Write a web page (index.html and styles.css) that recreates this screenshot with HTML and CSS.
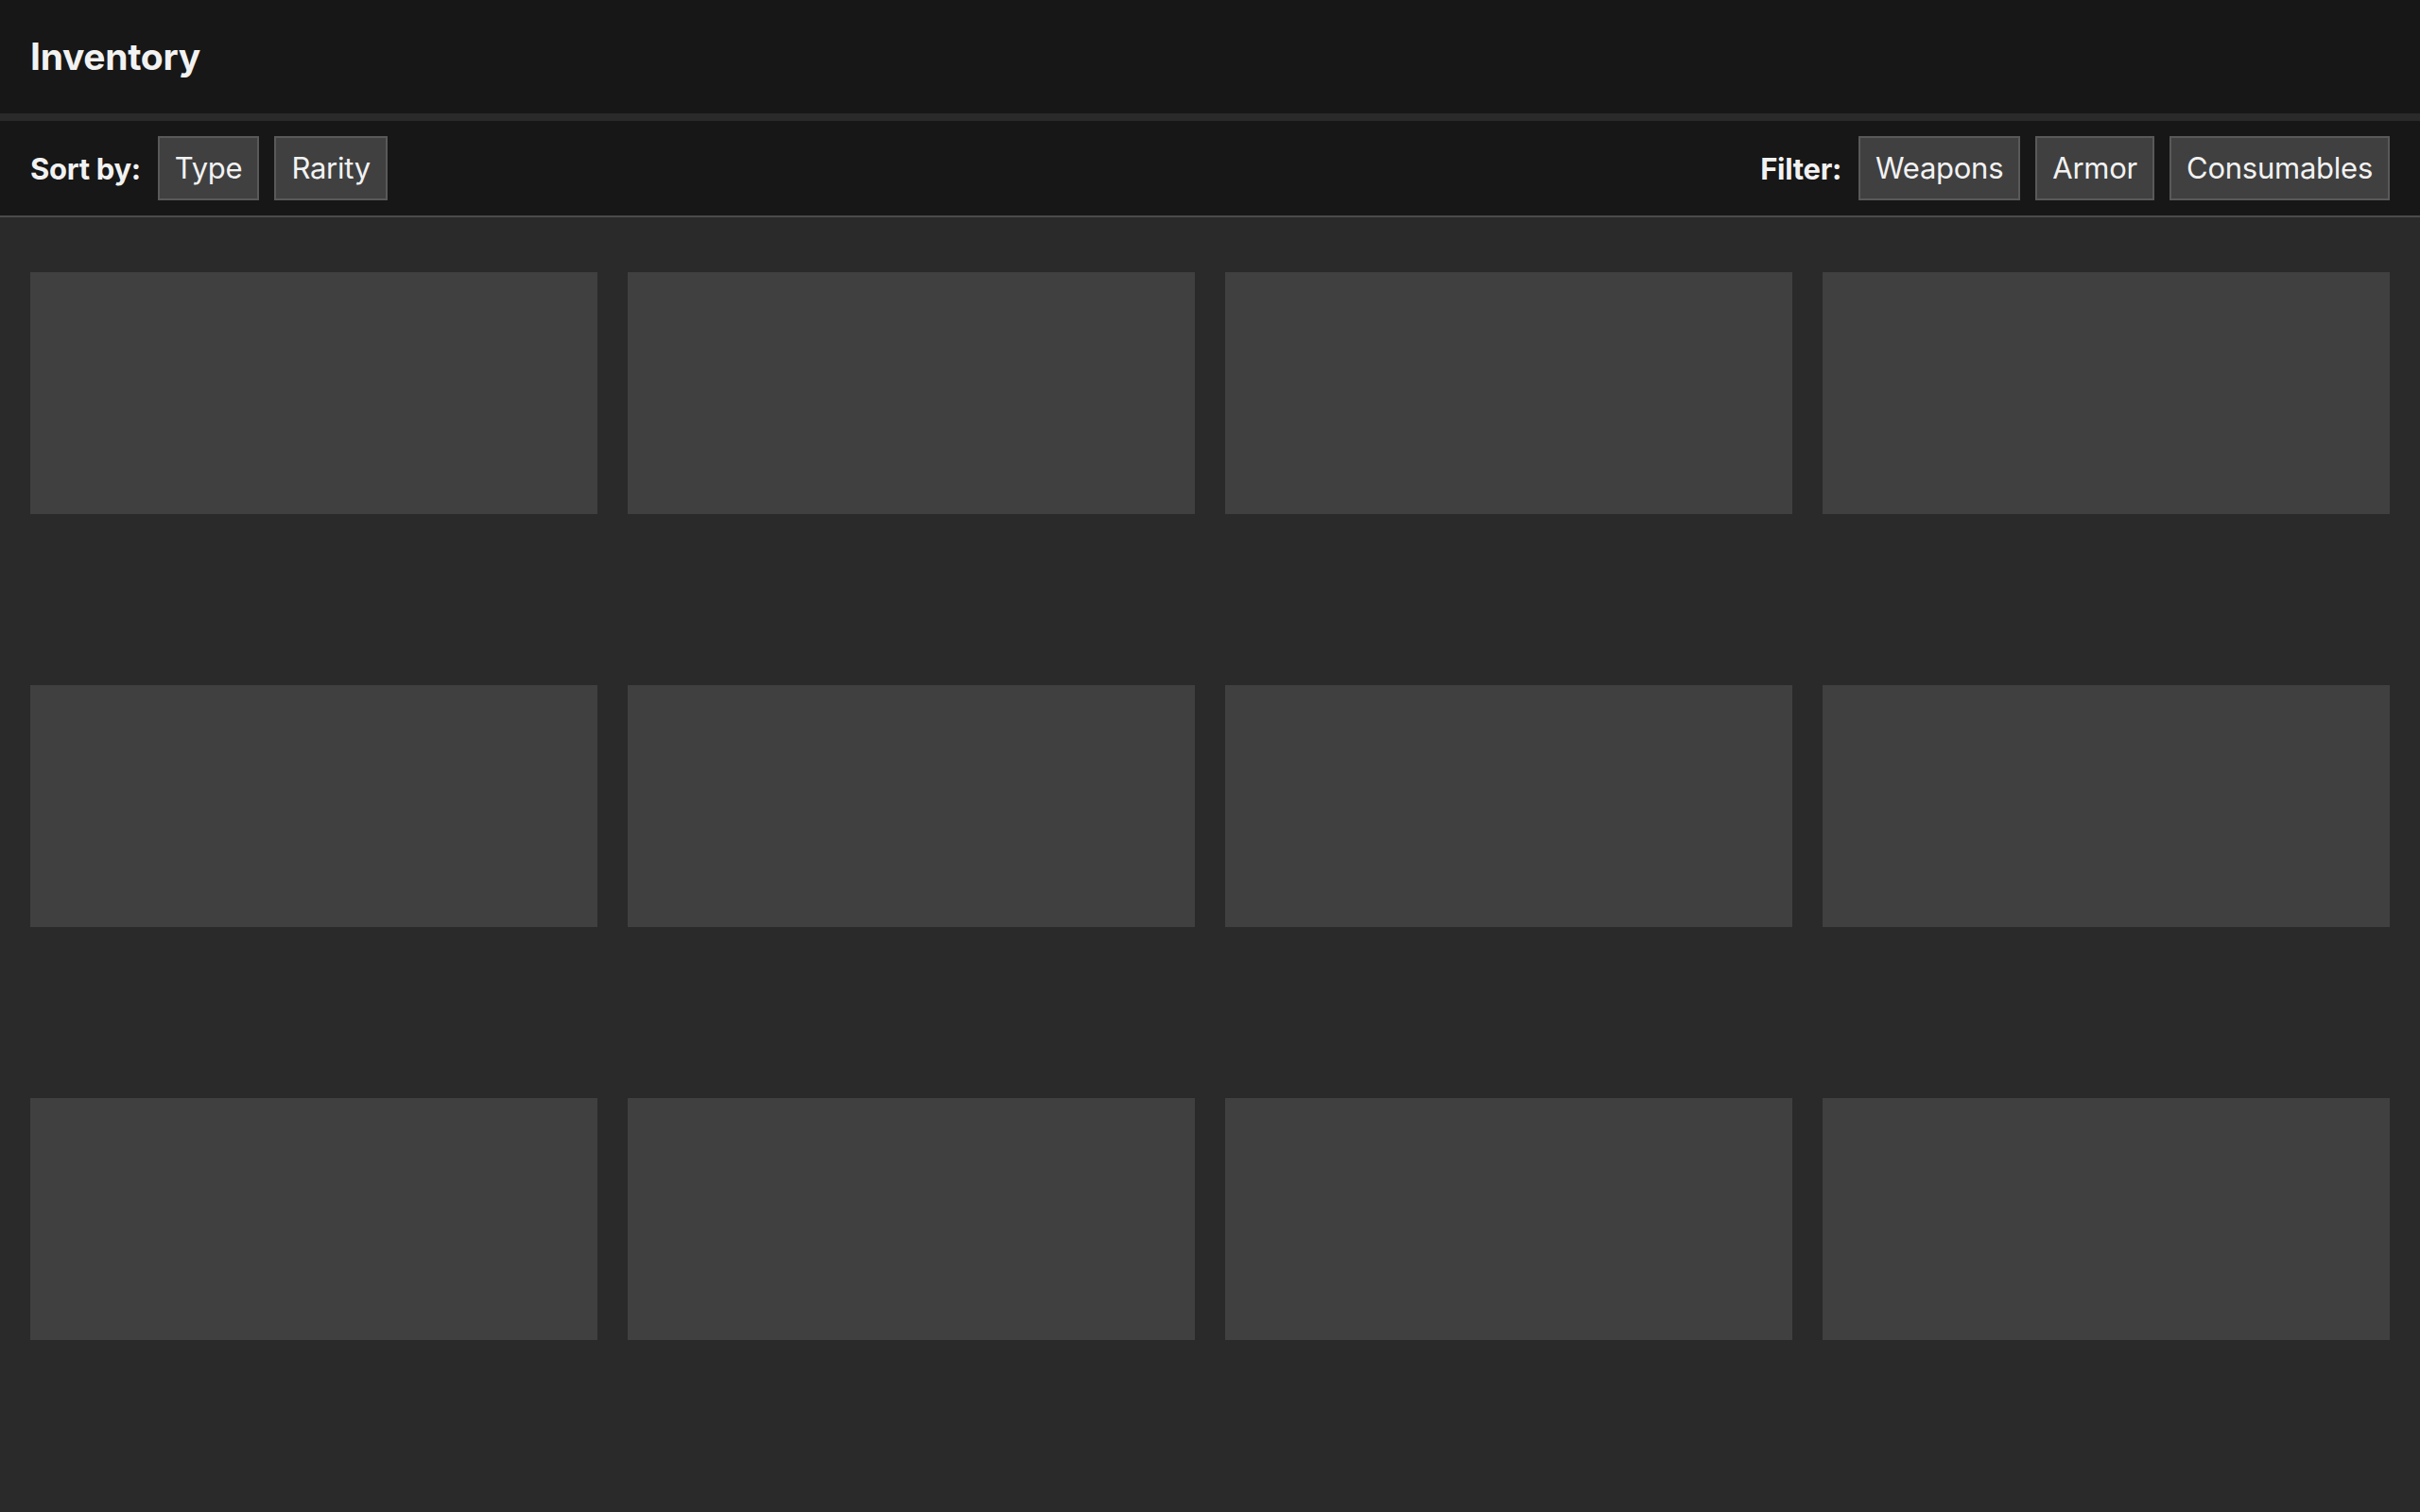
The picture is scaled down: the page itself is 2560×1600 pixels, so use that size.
FILE: index.html
```html
<!DOCTYPE html>
<html lang="en">
<head>
<meta charset="utf-8">
<title>Inventory</title>
<link rel="stylesheet" href="styles.css">
</head>
<body>
  <header class="app-header">
    <h1 class="app-title">Inventory</h1>
  </header>
  <nav class="toolbar">
    <div class="tool-group">
      <span class="tool-label">Sort by:</span>
      <button class="tool-btn">Type</button>
      <button class="tool-btn">Rarity</button>
    </div>
    <div class="tool-group">
      <span class="tool-label">Filter:</span>
      <button class="tool-btn">Weapons</button>
      <button class="tool-btn">Armor</button>
      <button class="tool-btn">Consumables</button>
    </div>
  </nav>
  <main class="inventory">
    <div class="grid">
      <div class="slot"></div>
      <div class="slot"></div>
      <div class="slot"></div>
      <div class="slot"></div>
      <div class="slot"></div>
      <div class="slot"></div>
      <div class="slot"></div>
      <div class="slot"></div>
      <div class="slot"></div>
      <div class="slot"></div>
      <div class="slot"></div>
      <div class="slot"></div>
    </div>
  </main>
</body>
</html>
```

FILE: styles.css
```css
* {
  box-sizing: border-box;
}

html, body {
  margin: 0;
  padding: 0;
}

body {
  min-height: 100vh;
  background: #2a2a2a;
  color: #f2f2f2;
  font-family: Inter, "Noto Sans", "Liberation Sans", sans-serif;
  display: flex;
  flex-direction: column;
}

.app-header {
  height: 120px;
  background: #171717;
  display: flex;
  align-items: center;
  padding: 0 32px;
  margin-bottom: 8px;
}

.app-title {
  margin: 0;
  font-size: 39px;
  font-weight: 700;
  letter-spacing: -0.3px;
  line-height: 48px;
  color: #f2f2f2;
}

.toolbar {
  background: #171717;
  border-bottom: 2px solid #4b4b4b;
  padding: 16px 32px;
  display: flex;
  justify-content: space-between;
  align-items: center;
}

.tool-group {
  display: flex;
  align-items: center;
  gap: 16px;
}

.tool-label {
  font-size: 31px;
  font-weight: 700;
  letter-spacing: -0.3px;
  margin-right: 2px;
}

.tool-btn {
  font-family: inherit;
  font-size: 31px;
  font-weight: 400;
  letter-spacing: -0.25px;
  line-height: 40px;
  color: #f2f2f2;
  background: #404040;
  border: 2px solid #595959;
  border-radius: 0;
  padding: 12px 16px;
  margin: 0;
}

.inventory {
  flex: 1;
  padding: 58px 32px 0;
}

.grid {
  display: grid;
  grid-template-columns: repeat(4, 1fr);
  column-gap: 32px;
  row-gap: 181px;
}

.slot {
  height: 256px;
  background: #404040;
}
```
